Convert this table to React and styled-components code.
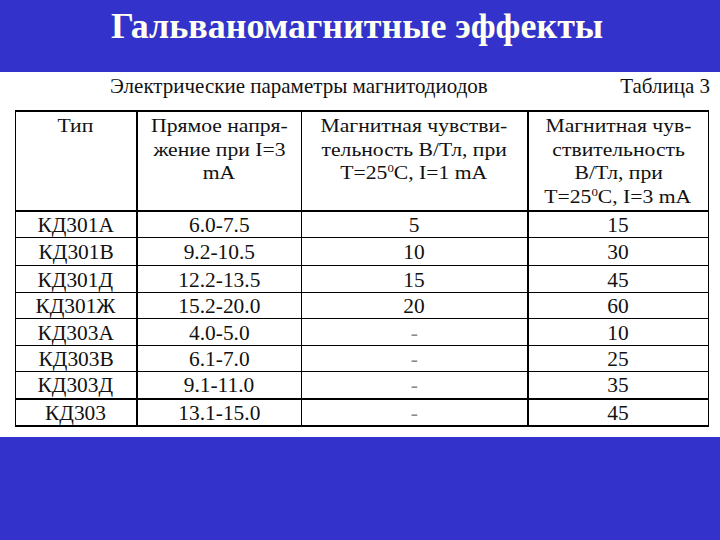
import styled, {createGlobalStyle} from "styled-components";

const GlobalStyle = createGlobalStyle`
  html, body {
    margin: 0;
    padding: 0;
    background: #3333cc;
  }
  body {
    width: 720px;
    height: 540px;
    overflow: hidden;
  }
`;

const Slide = styled.div`
  width: 720px;
  height: 540px;
  background: #3333cc;
  display: flex;
  flex-direction: column;
`;

const Title = styled.h1`
  margin: 0;
  height: 72px;
  box-sizing: border-box;
  padding: 8px 6px 0 0;
  text-align: center;
  font-family: "Liberation Serif", "Times New Roman", serif;
  font-weight: bold;
  font-size: 36px;
  line-height: 36px;
  color: #fffff2;
`;

const Panel = styled.div`
  background: #ffffff;
  height: 365px;
  box-sizing: border-box;
  padding: 2px 10px 0 15px;
  font-family: "Liberation Serif", "Times New Roman", serif;
  color: #111;
`;

const Caption = styled.div`
  display: flex;
  justify-content: space-between;
  padding-left: 95px;
  font-size: 21px;
  line-height: 24px;
  height: 24px;
  margin-bottom: 12px;
`;

// the source picture is stretched sideways a little, so text is widened to match
const Stretch = styled.span`
  display: inline-block;
  white-space: nowrap;
  transform: scaleX(${p => p.x});
`;

const Table = styled.table`
  border-collapse: collapse;
  width: 693px;
  table-layout: fixed;
  border: 2px solid #000;
  border-right-width: 1px;
  border-left-width: 1px;
`;

const Col = styled.col`
  width: ${p => p.w}px;
`;

const Row = styled.tr`
  height: ${p => p.h}px;
  border-top: ${p => p.thick ? 2 : 1}px solid #000;
`;

const HeadCell = styled.th`
  font-weight: normal;
  vertical-align: top;
  text-align: center;
  padding: 3px 0 0;
  font-size: 18.5px;
  line-height: 23.5px;
  border-right: ${p => p.thick ? 2 : 1}px solid #000;
  sup {
    font-size: 11px;
    line-height: 0;
    vertical-align: 7px;
  }
`;

const Cell = styled.td`
  text-align: center;
  padding: 2px 0 0;
  font-size: 20px;
  line-height: 23px;
  color: ${p => p.muted ? "#8a8a8a" : "#111"};
  border-right: ${p => p.thick ? 2 : 1}px solid #000;
`;

const rows = [
  {h: 26, cells: ["КД301А", "6.0-7.5", "5", "15"]},
  {h: 28, cells: ["КД301В", "9.2-10.5", "10", "30"]},
  {h: 27, cells: ["КД301Д", "12.2-13.5", "15", "45"]},
  {h: 26, cells: ["КД301Ж", "15.2-20.0", "20", "60"]},
  {h: 27, cells: ["КД303А", "4.0-5.0", "-", "10"]},
  {h: 26, cells: ["КД303В", "6.1-7.0", "-", "25"]},
  {h: 27, cells: ["КД303Д", "9.1-11.0", "-", "35"]},
  {h: 26, cells: ["КД303", "13.1-15.0", "-", "45"]},
];

const H = 1.17;
const D = 1.07;

export default function App() {
  return <Slide>
    <GlobalStyle/>
    <Title>Гальваномагнитные эффекты</Title>
    <Panel>
      <Caption>
        <span>Электрические параметры магнитодиодов</span>
        <span>Таблица 3</span>
      </Caption>
      <Table>
        <colgroup>
          <Col w={121}/>
          <Col w={165}/>
          <Col w={226}/>
          <Col w={181}/>
        </colgroup>
        <tbody>
          <Row h={100} thick>
            <HeadCell thick><Stretch x={H}>Тип</Stretch></HeadCell>
            <HeadCell>
              <Stretch x={H}>Прямое напря-</Stretch><br/>
              <Stretch x={H}>жение при I=3</Stretch><br/>
              <Stretch x={H}>mA</Stretch>
            </HeadCell>
            <HeadCell thick>
              <Stretch x={H}>Магнитная чувстви-</Stretch><br/>
              <Stretch x={H}>тельность В/Тл, при</Stretch><br/>
              <Stretch x={H}>T=25<sup>0</sup>C, I=1 mA</Stretch>
            </HeadCell>
            <HeadCell>
              <Stretch x={H}>Магнитная чув-</Stretch><br/>
              <Stretch x={H}>ствительность</Stretch><br/>
              <Stretch x={H}>В/Тл, при</Stretch><br/>
              <Stretch x={H}>T=25<sup>0</sup>C, I=3 mA</Stretch>
            </HeadCell>
          </Row>
          {rows.map((r, i) => (
            <Row key={r.cells[0]} h={r.h} thick={i === 0 || i === 7}>
              <Cell thick><Stretch x={D}>{r.cells[0]}</Stretch></Cell>
              <Cell><Stretch x={D}>{r.cells[1]}</Stretch></Cell>
              <Cell thick muted={r.cells[2] === "-"}><Stretch x={D}>{r.cells[2]}</Stretch></Cell>
              <Cell><Stretch x={D}>{r.cells[3]}</Stretch></Cell>
            </Row>
          ))}
        </tbody>
      </Table>
    </Panel>
  </Slide>
}
